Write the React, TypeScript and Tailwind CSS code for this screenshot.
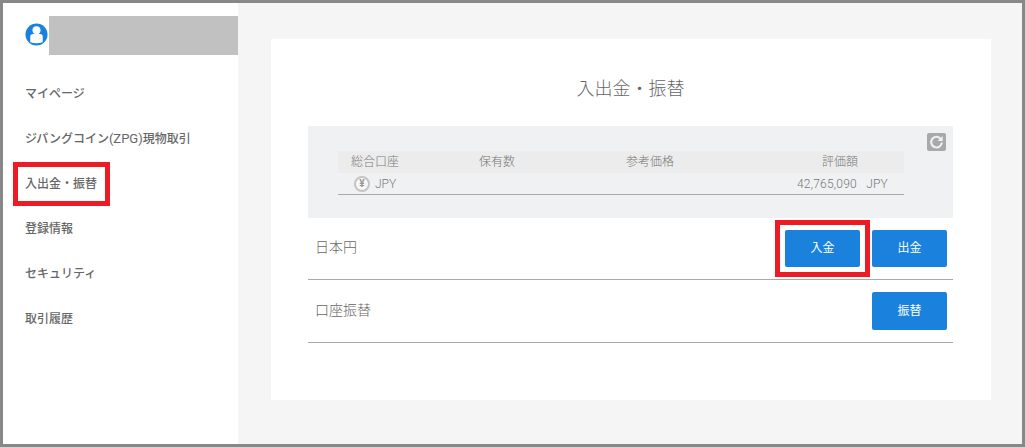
const jp = { fontFamily: '"Roboto","Noto Sans CJK JP",sans-serif' };

const items = ["マイページ", "ジパングコイン", "入出金・振替", "登録情報", "セキュリティ", "取引履歴"];

function Btn({ label }: { label: string }) {
  return (
    <button className="w-[75px] h-[37px] rounded-[2px] bg-[#1a82dc] text-white text-[12px] leading-[37px] text-center">
      {label}
    </button>
  );
}

export default function App() {
  return (
    <div style={jp} className="w-[1025px] h-[447px] border-[3px] border-[#888888] flex bg-[#f5f5f5] overflow-hidden text-[#666666]">
      <aside className="w-[235px] h-full bg-white shrink-0">
        <div className="flex items-center h-[39px] mt-[13px] pl-[22px]">
          <svg width="23" height="23" viewBox="0 0 24 24" className="shrink-0 -mt-[3px]">
            <circle cx="12" cy="12" r="11.500" fill="#1a82dc" />
            <circle cx="12" cy="7.500" r="4.200" fill="#fff" />
            <path d="M5.500 20 V14.500 Q5.500 11.500 8.500 11.500 H15.500 Q18.500 11.500 18.500 14.500 V20 Q15 21 12 21 Q9 21 5.500 20Z" fill="#fff" />
          </svg>
          <div className="ml-[1px] flex-1 h-[39px] bg-[#c1c1c1]" />
        </div>
        <nav className="mt-[16px] pl-[22px] flex flex-col">
          {items.map((t) => (
            <a key={t} className="h-[45px] flex items-center text-[12px] font-medium text-[#666666] whitespace-pre">
              {t}
              {t === "ジパングコイン" && (
                <>
                  <span className="text-[13px] font-normal">(ZPG)</span>
                  現物取引
                </>
              )}
            </a>
          ))}
        </nav>
      </aside>
      <main className="flex-1 pl-[33px] pt-[36px]">
        <div className="w-[720px] h-[361px] bg-white pl-[37px] pr-[38px]">
          <h1 className="h-[87px] pt-[38px] text-center text-[18px] leading-[24px] font-light text-[#666666]">入出金・振替</h1>
          <section className="relative h-[92px] bg-[#f0f1f3] px-[30px] pt-[25px]">
            <div className="absolute right-[7px] top-[7px] w-[19px] h-[18px] rounded-[2px] bg-[#a9a9a9] flex items-center justify-center">
              <svg width="15" height="15" viewBox="0 0 14 14" fill="none">
                <path d="M11 3.600 A5 5 0 1 0 12 7" stroke="#f0f1f3" strokeWidth="2" />
                <path d="M8 5.500 L12.800 5.500 L12.800 1 Z" fill="#f0f1f3" />
              </svg>
            </div>
            <div className="w-[566px] h-[22px] bg-[#ececec] grid grid-cols-[141px_147px_170px_108px] items-center text-[12px] font-light text-[#777777]">
              <span className="pl-[13px]">総合口座</span>
              <span>保有数</span>
              <span>参考価格</span>
              <span className="text-right pr-[46px]">評価額</span>
            </div>
            <div className="w-[566px] h-[22px] border-b border-[#a9a9a9] flex items-center justify-between text-[12px] font-light text-[#777777]">
              <span className="flex items-center pl-[16px]">
                <span className="w-[16px] h-[16px] rounded-full border-2 border-[#c4c4c4] bg-[#f8f8f8] text-[10px] font-bold leading-[12px] text-center text-[#999999]">¥</span>
                <span className="ml-[5px]">JPY</span>
              </span>
              <span className="pr-[16px] whitespace-pre tracking-[0.2px]">42,765,090   JPY</span>
            </div>
          </section>
          <div className="h-[62px] border-b border-[#a9a9a9] flex items-center justify-between pl-[7px] pr-[6px]">
            <span className="text-[14px] font-light text-[#666666] -mt-[3px]">日本円</span>
            <div className="flex gap-[12px] -mt-[1px]">
              <Btn label="入金" />
              <Btn label="出金" />
            </div>
          </div>
          <div className="h-[63px] border-b border-[#a9a9a9] flex items-center justify-between pl-[7px] pr-[6px]">
            <span className="text-[14px] font-light text-[#666666] -mt-[2px]">口座振替</span>
            <button className="w-[75px] h-[38px] rounded-[2px] bg-[#1a82dc] text-white text-[12px] text-center">振替</button>
          </div>
        </div>
      </main>
      <div className="absolute left-[13px] top-[162px] w-[97px] h-[44px] border-[5px] border-[#ed1c24]" />
      <div className="absolute left-[775px] top-[220px] w-[95px] h-[57px] border-[5px] border-[#ed1c24]" />
    </div>
  );
}
